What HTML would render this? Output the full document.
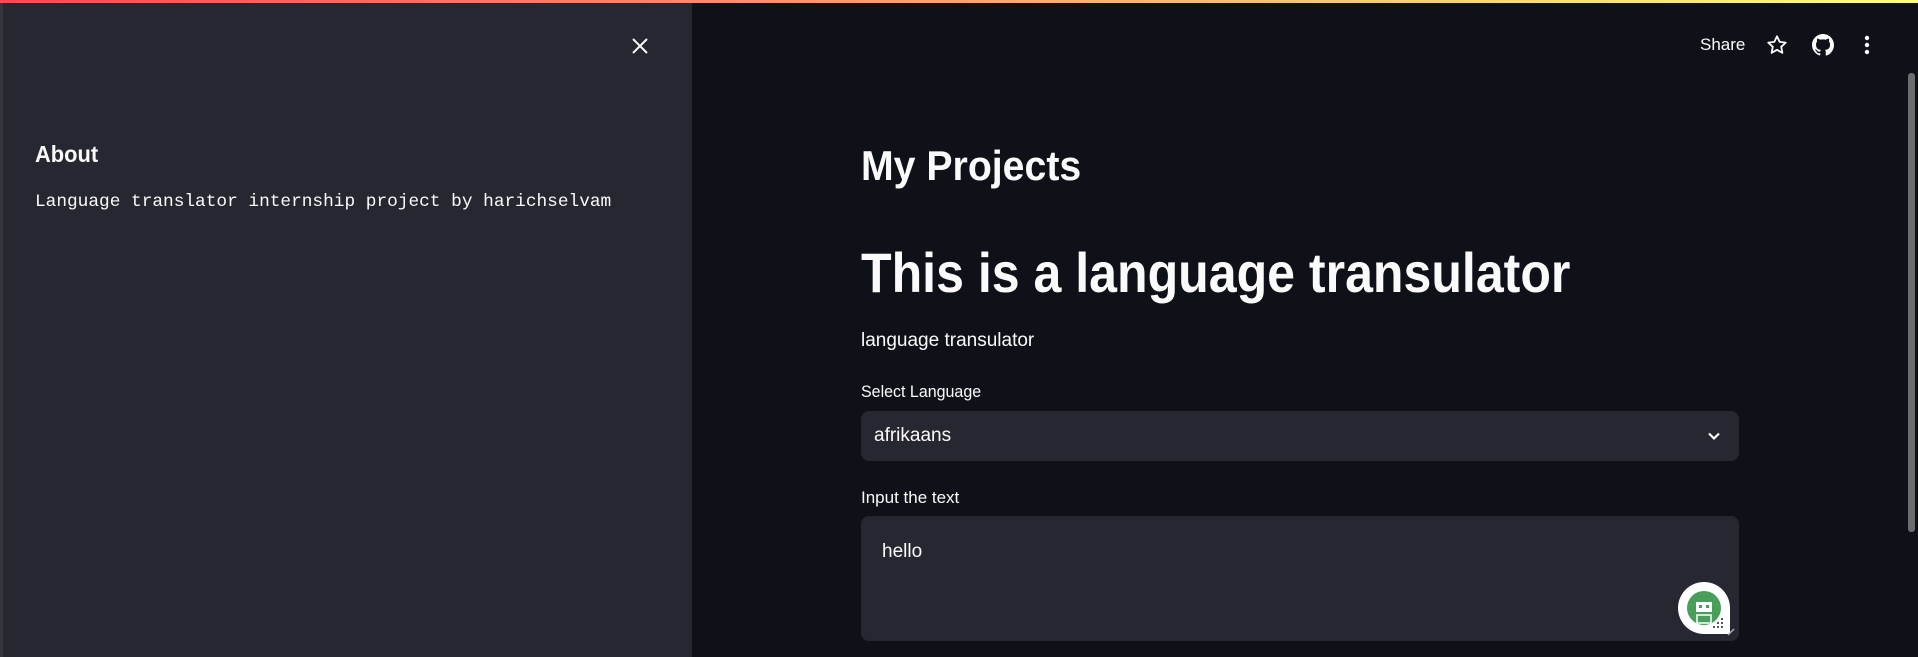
<!DOCTYPE html>
<html><head><meta charset="utf-8"><style>
*{margin:0;padding:0;box-sizing:border-box}
body{width:1918px;height:657px;overflow:hidden;background:#0e1117;font-family:"Liberation Sans",sans-serif;color:#fafafa;position:relative}
.top{position:absolute;left:0;top:0;width:1918px;height:3px;background:linear-gradient(90deg,#ff4b4b,#fffd80)}
.side{position:absolute;left:0;top:3px;width:692px;height:654px;background:#262730;border-left:3px solid #34353d}
.abs{position:absolute;white-space:nowrap}
.sx{display:inline-block;transform-origin:left center}
.box{position:absolute;left:861px;width:878px;background:#262730;border-radius:8px}
.scroll{position:absolute;left:1908px;top:73px;width:7px;height:459px;background:#6b6c70;border-radius:3px}
</style></head><body>
<div class="top"></div>
<div class="side"></div>
<svg class="abs" style="left:631px;top:37px" width="18" height="18" viewBox="0 0 18 18"><path d="M2 2L16 16M16 2L2 16" stroke="#fafafa" stroke-width="2"/></svg>
<div class="abs" style="left:35px;top:141px;font-size:23px;font-weight:bold"><span class="sx" style="transform:scaleX(0.95)">About</span></div>
<div class="abs" style="left:35px;top:192px;font-family:'Liberation Mono',monospace;font-size:17.8px">Language translator internship project by harichselvam</div>

<div class="abs" style="left:1700px;top:35px;font-size:17px">Share</div>
<svg class="abs" style="left:1766px;top:34px" width="22" height="22" viewBox="0 0 24 24"><path d="M12 2.5l2.9 6.1 6.6.8-4.9 4.6 1.3 6.6L12 17.3l-5.9 3.3 1.3-6.6L2.5 9.4l6.6-.8z" fill="none" stroke="#fafafa" stroke-width="2" stroke-linejoin="round"/></svg>
<svg class="abs" style="left:1812px;top:34px" width="22" height="22" viewBox="0 0 16 16"><path fill="#fafafa" d="M8 0C3.58 0 0 3.58 0 8c0 3.54 2.29 6.53 5.470 7.59.4.07.55-.17.55-.38v-1.33c-2.23.48-2.7-1.070-2.7-1.07-.36-.92-.89-1.17-.89-1.17-.73-.5.06-.49.06-.49.8.06 1.230.83 1.23.83.71 1.22 1.87.87 2.33.66.07-.52.28-.87.51-1.07-1.78-.2-3.64-.89-3.64-3.95 0-.87.31-1.59.82-2.15-.08-.2-.36-1.02.08-2.12 0 0 .67-.21 2.2.82a7.6 7.6 0 0 1 4 0c1.53-1.04 2.2-.82 2.2-.82.44 1.1.16 1.92.08 2.12.51.56.82 1.27.82 2.15 0 3.07-1.87 3.75-3.65 3.95.29.25.54.73.54 1.48v2.2c0 .21.15.46.55.38A8.01 8.01 0 0 0 16 8c0-4.42-3.58-8-8-8z"/></svg>
<svg class="abs" style="left:1862px;top:34px" width="10" height="22" viewBox="0 0 10 22"><circle cx="5" cy="4" r="2.2" fill="#fafafa"/><circle cx="5" cy="11" r="2.2" fill="#fafafa"/><circle cx="5" cy="18" r="2.2" fill="#fafafa"/></svg>

<div class="abs" style="left:861px;top:142px;font-size:42px;font-weight:bold"><span class="sx" style="transform:scaleX(0.934)">My Projects</span></div>
<div class="abs" style="left:861px;top:240px;font-size:56px;font-weight:bold"><span class="sx" style="transform:scaleX(0.894)">This is a language transulator</span></div>
<div class="abs" style="left:861px;top:330px;font-size:19px"><span class="sx" style="transform:scaleX(1.0)">language transulator</span></div>
<div class="abs" style="left:861px;top:383px;font-size:16.5px"><span class="sx" style="transform:scaleX(0.97)">Select Language</span></div>
<div class="box" style="top:411px;height:50px"></div>
<div class="abs" style="left:874px;top:425px;font-size:19px"><span class="sx" style="transform:scaleX(1.0)">afrikaans</span></div>
<svg class="abs" style="left:1706px;top:428px" width="16" height="16" viewBox="0 0 16 16"><path d="M3 5.5l5 5 5-5" fill="none" stroke="#fafafa" stroke-width="2.2"/></svg>
<div class="abs" style="left:861px;top:489px;font-size:16.5px"><span class="sx" style="transform:scaleX(1.03)">Input the text</span></div>
<div class="box" style="top:516px;height:125px"></div>
<div class="abs" style="left:882px;top:541px;font-size:19px"><span class="sx" style="transform:scaleX(1.0)">hello</span></div>
<svg class="abs" style="left:1676px;top:580px" width="60" height="58" viewBox="0 0 60 58"><path d="M28 2a26 26 0 1 0 0 52h26V28A26 26 0 0 0 28 2z" fill="#fff"/><circle cx="28" cy="28" r="17" fill="#4a9e5c"/><rect x="20" y="22" width="16" height="10" fill="#fff"/><rect x="23" y="25" width="3" height="3" fill="#4a9e5c"/><rect x="30" y="25" width="3" height="3" fill="#4a9e5c"/><rect x="21" y="35" width="14" height="8" fill="none" stroke="#fff" stroke-width="1.5"/><g fill="#555"><rect x="41" y="42" width="2" height="2"/><rect x="45" y="42" width="2" height="2"/><rect x="45" y="38" width="2" height="2"/><rect x="37" y="46" width="2" height="2"/><rect x="41" y="46" width="2" height="2"/><rect x="45" y="46" width="2" height="2"/></g><path d="M52 55l6-6" stroke="#aaa" stroke-width="1.5"/></svg>
<div class="scroll"></div>
</body></html>
